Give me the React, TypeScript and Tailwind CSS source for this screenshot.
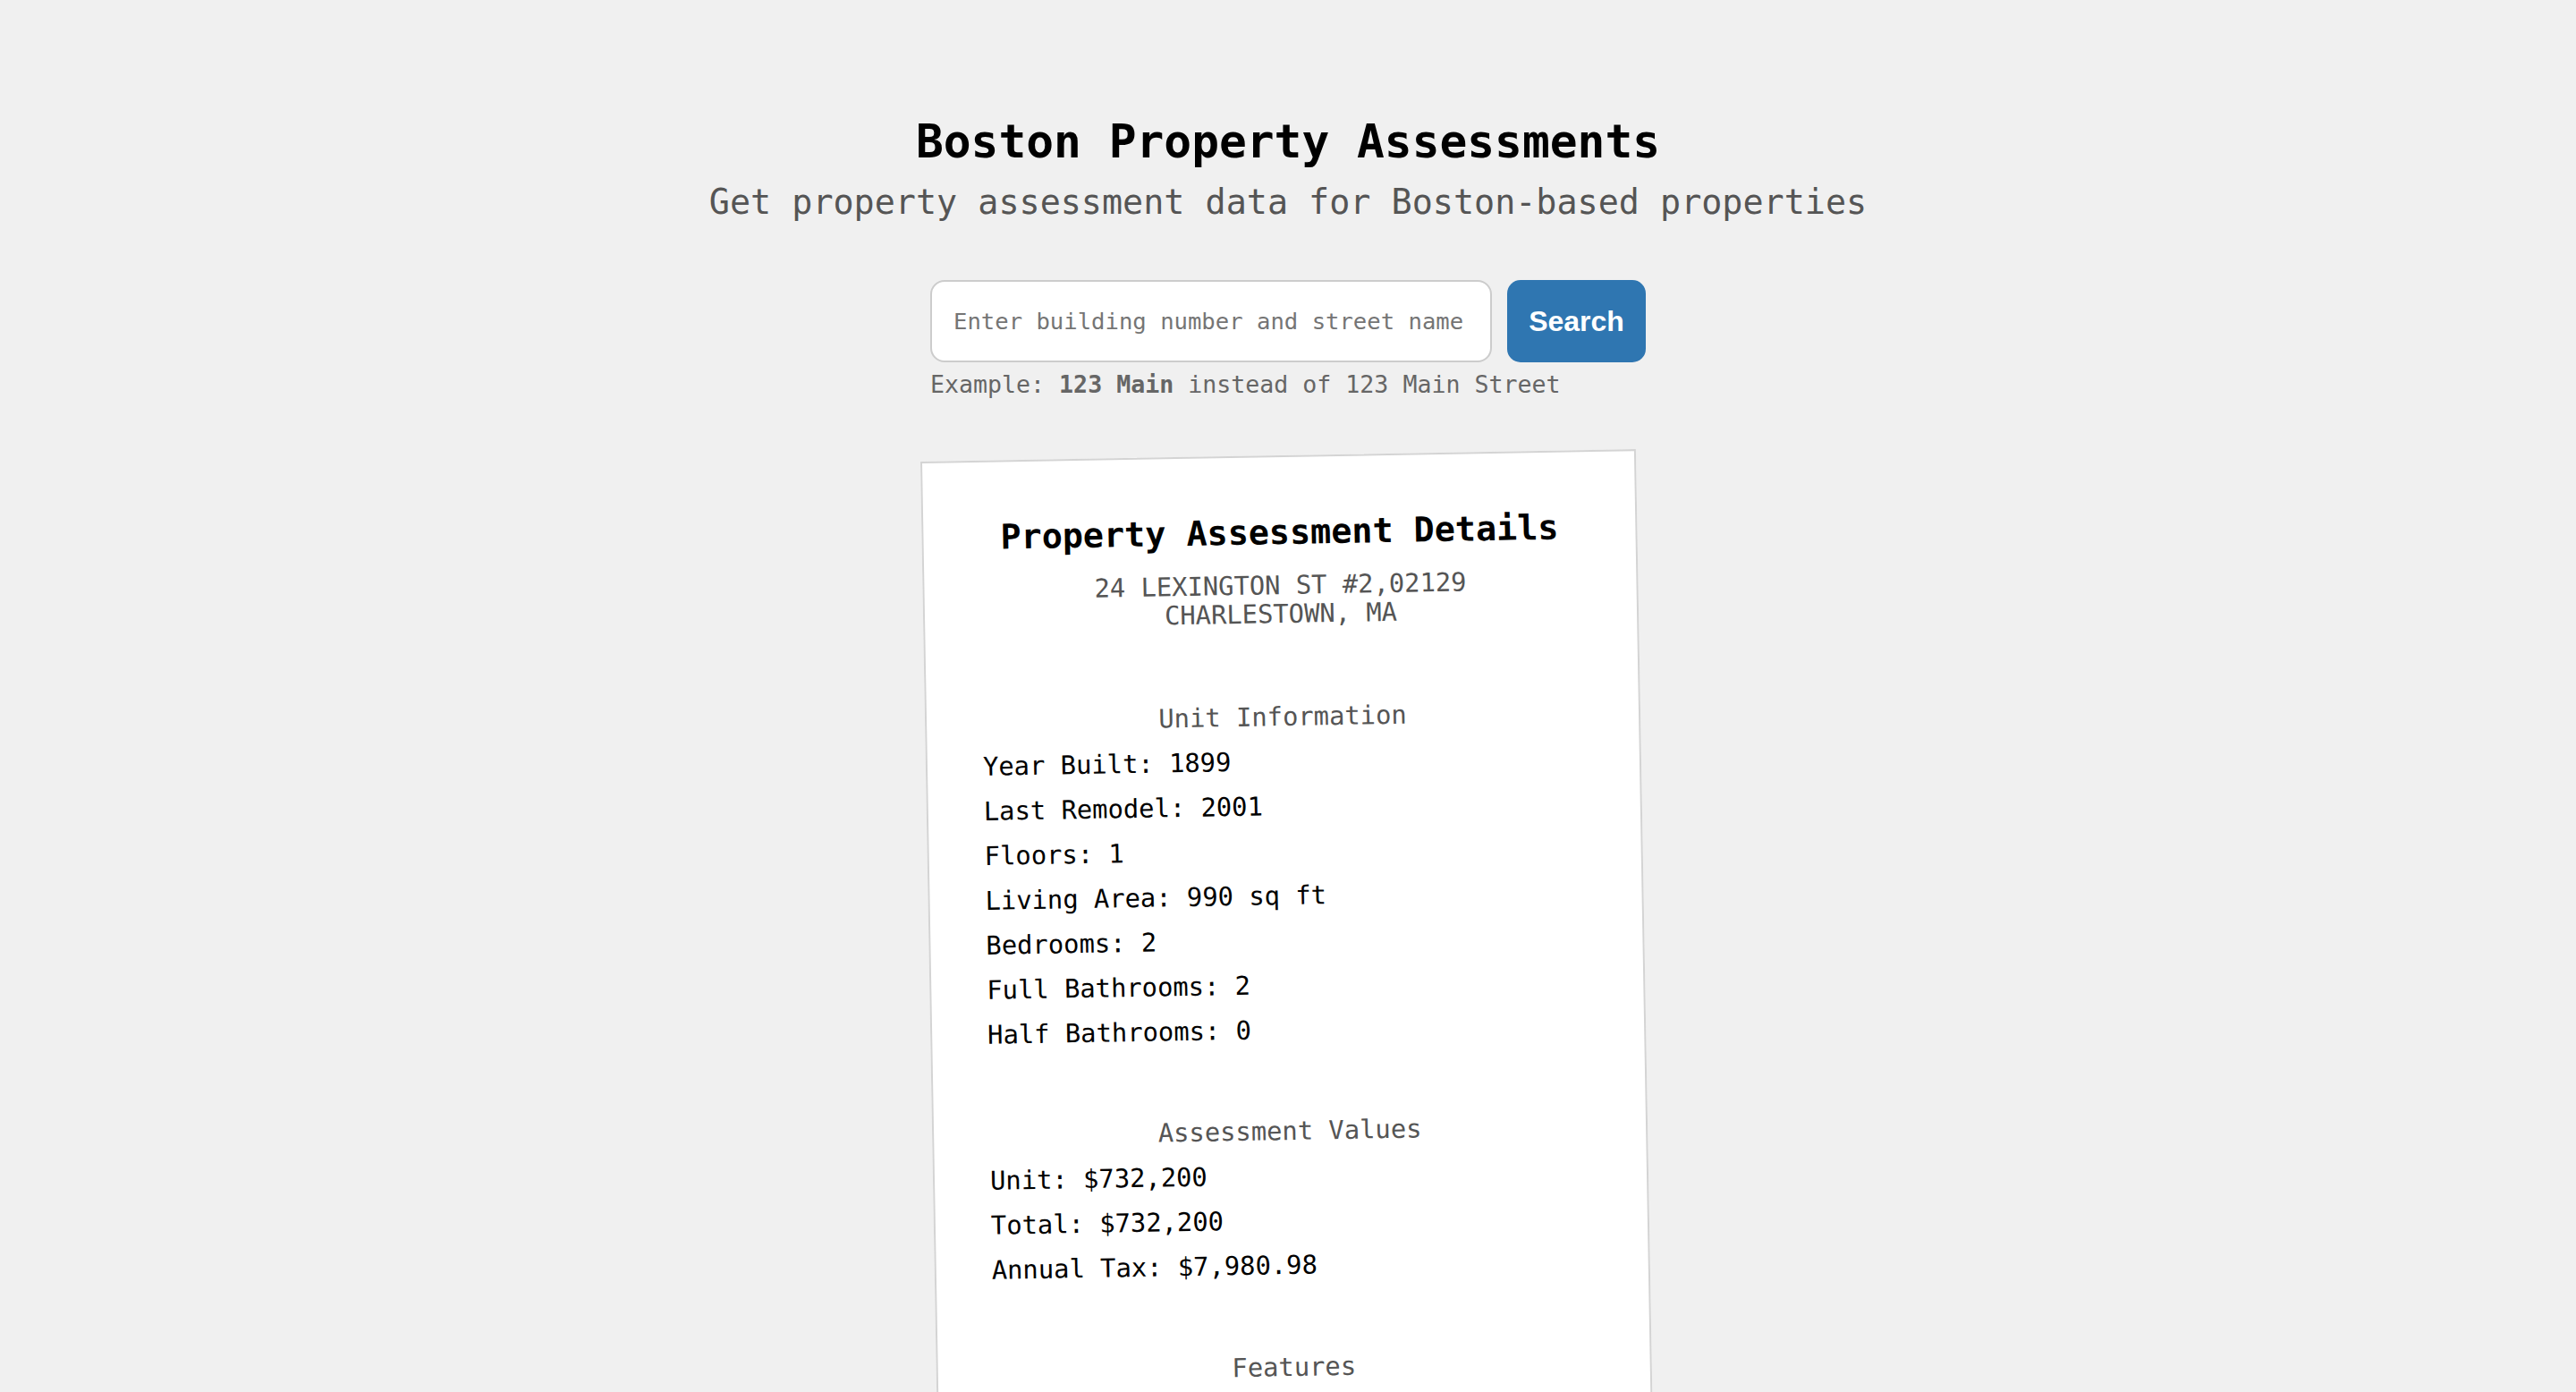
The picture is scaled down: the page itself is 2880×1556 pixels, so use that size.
import React, { useState } from 'react';

const unitInfo = [
  ['Year Built', '1899'],
  ['Last Remodel', '2001'],
  ['Floors', '1'],
  ['Living Area', '990 sq ft'],
  ['Bedrooms', '2'],
  ['Full Bathrooms', '2'],
  ['Half Bathrooms', '0'],
];

const values = [
  ['Unit', '$732,200'],
  ['Total', '$732,200'],
  ['Annual Tax', '$7,980.98'],
];

const features = [
  ['Heat Type', 'Forced Hot Air'],
  ['AC Type', 'None'],
  ['Parking', 'None'],
];

function Section({ title, rows, gap }: { title: string; rows: string[][]; gap: string }) {
  return (
    <div className={gap}>
      <h3 className="text-center text-[28.8px] leading-[50px] text-[#555]">{title}</h3>
      <ul>
        {rows.map(([label, value]) => (
          <li key={label} className="text-[28.8px] leading-[50px] text-black">
            {label}: {value}
          </li>
        ))}
      </ul>
    </div>
  );
}

export default function App() {
  const [query, setQuery] = useState('');

  return (
    <div className="h-screen overflow-hidden bg-[#f0f0f0] font-['DejaVu_Sans_Mono',monospace]">
      <div className="flex flex-col items-center pt-[128px]">
        {/* Header */}
        <h1 className="text-[51.2px] font-bold leading-[60px] text-black">Boston Property Assessments</h1>
        <p className="mt-[16px] text-[38.4px] leading-[44px] text-[#555]">
          Get property assessment data for Boston-based properties
        </p>

        {/* Search form */}
        <form onSubmit={(e) => e.preventDefault()} className="mt-[65px] w-[800px]">
          <div className="flex gap-[17px]">
            <input
              type="text"
              value={query}
              onChange={(e) => setQuery(e.target.value)}
              placeholder="Enter building number and street name"
              className="h-[92px] w-[628px] rounded-[16px] border-2 border-[#ccc] bg-white px-[24px] text-[25.6px] text-black outline-none placeholder:text-[#757575]"
            />
            <button
              type="submit"
              className="h-[92px] w-[155px] rounded-[15px] bg-[#2f76b1] font-['Liberation_Sans',Arial,sans-serif] text-[32px] font-bold text-white"
            >
              Search
            </button>
          </div>
          <p className="mt-[10px] text-[26.6px] leading-[30px] text-[#666]">
            Example: <strong className="font-bold">123 Main</strong> instead of 123 Main Street
          </p>
        </form>

        {/* Result card */}
        <div className="mt-[64px] w-[800px] -rotate-1 border-2 border-[#d4d4d4] bg-white px-[62px] pt-[61px] pb-[72px]">
          <h2 className="text-center text-[38.4px] font-bold leading-[45px] text-black">Property Assessment Details</h2>
          <p className="mt-[21px] text-center text-[28.8px] leading-[32px] text-[#555]">
            24 LEXINGTON ST #2,02129
            <br />
            CHARLESTOWN, MA
          </p>
          <Section title="Unit Information" rows={unitInfo} gap="mt-[74px]" />
          <Section title="Assessment Values" rows={values} gap="mt-[63px]" />
          <Section title="Features" rows={features} gap="mt-[64px]" />
        </div>
      </div>
    </div>
  );
}
